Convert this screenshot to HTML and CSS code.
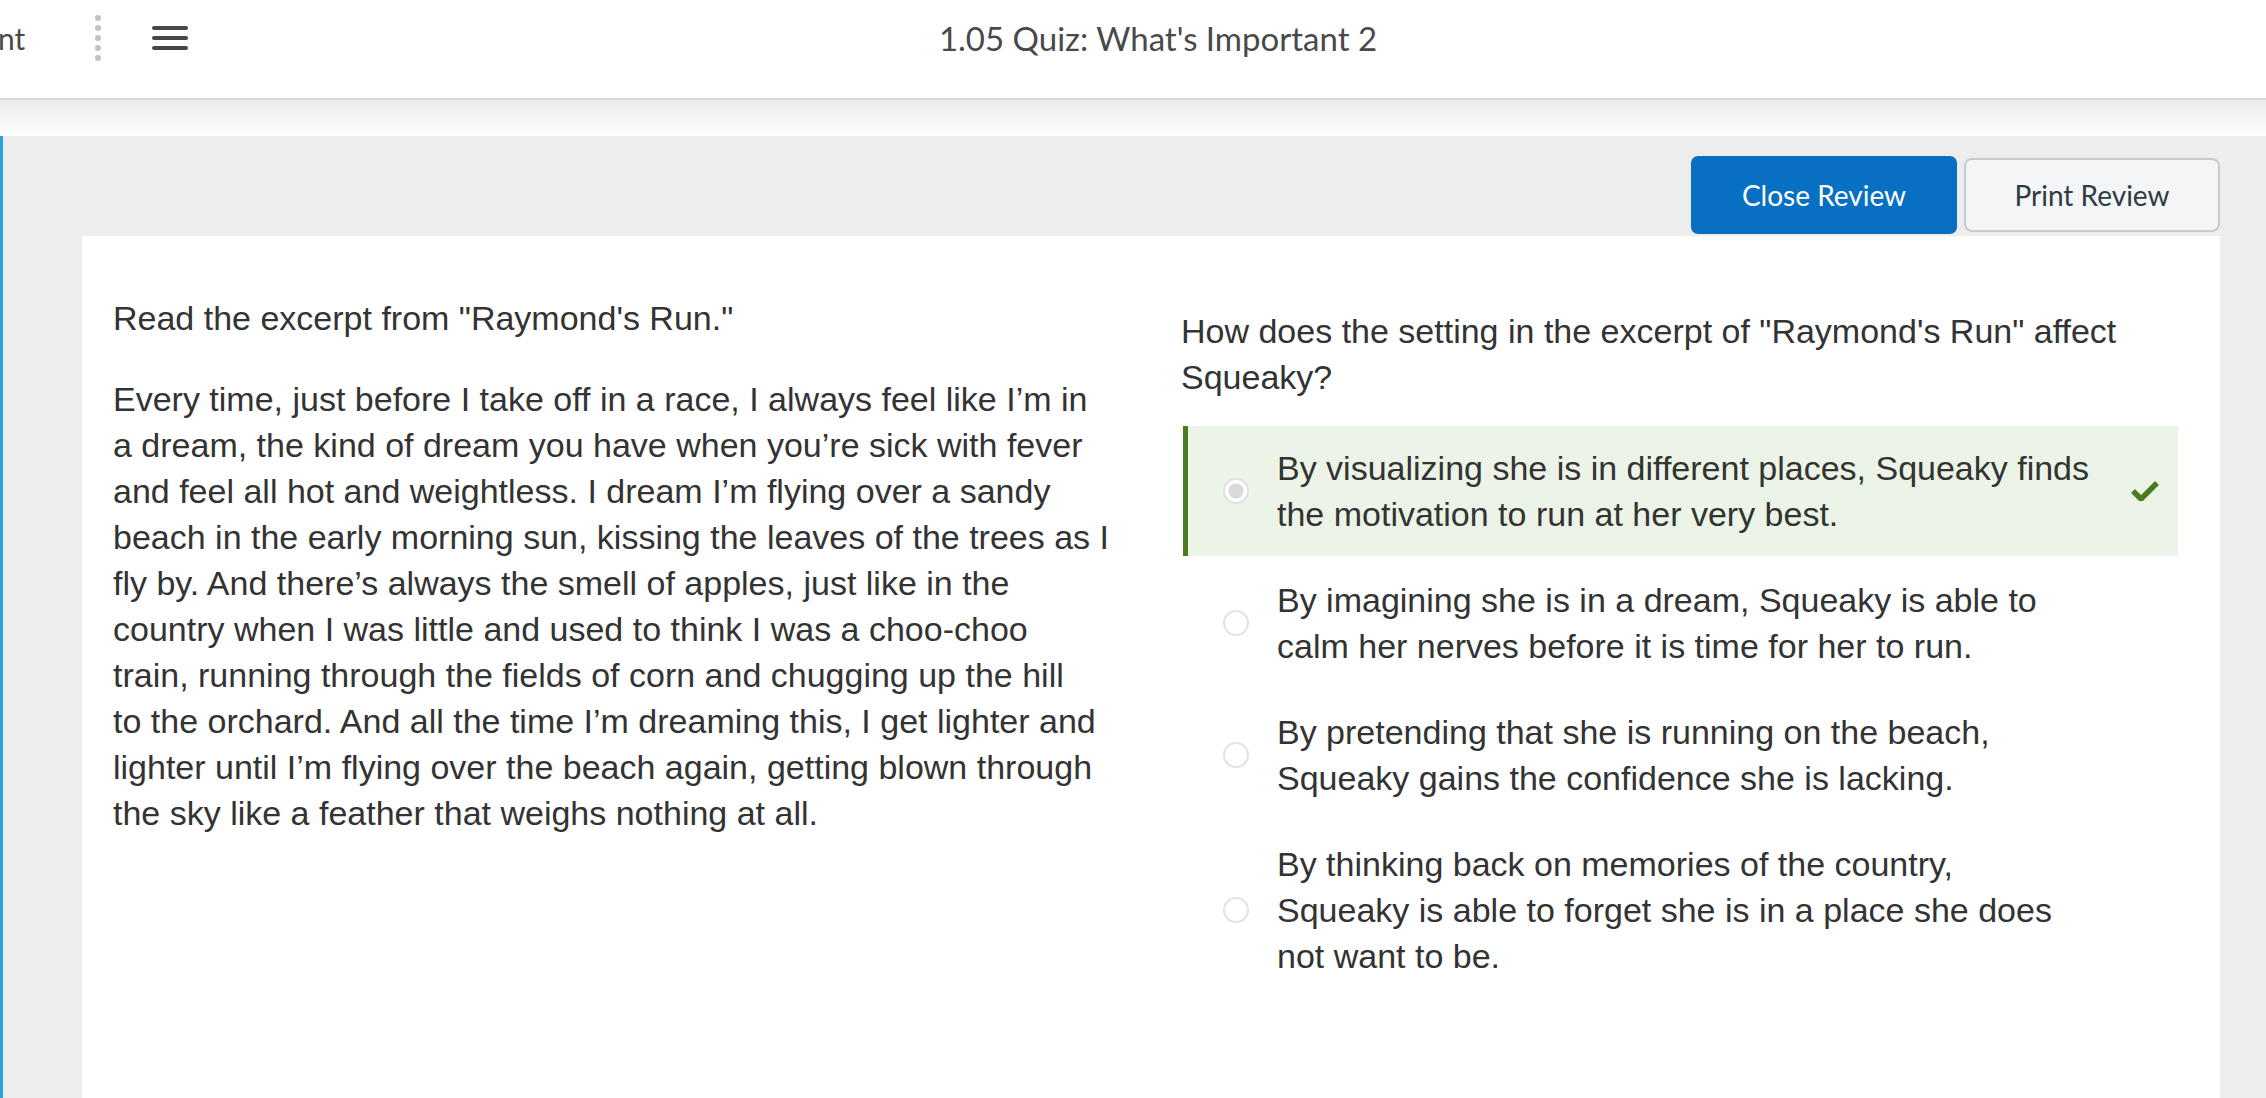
FILE: index.html
```html
<!DOCTYPE html>
<html lang="en">
<head>
  <meta charset="UTF-8">
  <title>1.05 Quiz: What's Important 2</title>
  <link rel="stylesheet" href="styles.css">
</head>
<body>
  <!-- Top bar -->
  <header class="topbar">
    <div class="topbar-left">
      <span class="course-name">nt</span>
      <span class="kebab"><i></i><i></i><i></i><i></i><i></i></span>
      <button type="button" class="menu-btn" aria-label="Menu">
        <span></span><span></span><span></span>
      </button>
    </div>
    <h1 class="page-title">1.05 Quiz: What's Important 2</h1>
    <div class="topbar-right"></div>
  </header>
  <div class="topbar-shadow"></div>

  <main class="review">
    <div class="review-actions">
      <button type="button" class="btn btn-primary">Close Review</button>
      <button type="button" class="btn btn-default">Print Review</button>
    </div>

    <section class="review-card">
      <!-- Passage -->
      <div class="passage">
        <p>Read the excerpt from "Raymond's Run."</p>
        <p>Every time, just before I take off in a race, I always feel like I’m in a dream, the kind of dream you have when you’re sick with fever and feel all hot and weightless. I dream I’m flying over a sandy beach in the early morning sun, kissing the leaves of the trees as I fly by. And there’s always the smell of apples, just like in the country when I was little and used to think I was a choo-choo train, running through the fields of corn and chugging up the hill<br>to the orchard. And all the time I’m dreaming this, I get lighter and lighter until I’m flying over the beach again, getting blown through the sky like a feather that weighs nothing at all.</p>
      </div>

      <!-- Question -->
      <div class="question">
        <p class="prompt">How does the setting in the excerpt of "Raymond's Run" affect Squeaky?</p>
        <ul class="choices">
          <li class="choice correct">
            <span class="radio checked"></span>
            <span class="choice-text">By visualizing she is in different places, Squeaky finds the motivation to run at her very best.</span>
            <svg class="check" viewBox="0 0 28 20" width="28" height="20"><polyline points="2,10 10,18 26,2" fill="none" stroke="#4b7b1f" stroke-width="5.5"/></svg>
          </li>
          <li class="choice">
            <span class="radio"></span>
            <span class="choice-text">By imagining she is in a dream, Squeaky is able to calm her nerves before it is time for her to run.</span>
          </li>
          <li class="choice">
            <span class="radio"></span>
            <span class="choice-text">By pretending that she is running on the beach, Squeaky gains the confidence she is lacking.</span>
          </li>
          <li class="choice">
            <span class="radio"></span>
            <span class="choice-text">By thinking back on memories of the country, Squeaky is able to forget she is in a place she does not want to be.</span>
          </li>
        </ul>
      </div>
    </section>
  </main>
</body>
</html>
```

FILE: styles.css
```css
body {
  margin: 0;
  font-family: "Liberation Sans", Arial, sans-serif;
  color: #333;
  background: #fff;
  overflow: hidden;
}

/* Top bar */
.topbar {
  display: flex;
  align-items: flex-start;
  height: 98px;
  background: #fff;
  border-bottom: 2px solid #d7d7d7;
  font-family: Lato, "Liberation Sans", sans-serif;
  color: #494949;
}
.topbar-left {
  display: flex;
  align-items: center;
  height: 76px;
  width: 190px;
}
.course-name {
  width: 97px;
  margin-left: -2px;
  font-size: 30px;
}
.kebab {
  display: flex;
  flex-direction: column;
  gap: 4px;
}
.kebab i {
  width: 6px;
  height: 6px;
  border-radius: 50%;
  background: #c3c3c3;
}
.menu-btn {
  display: flex;
  flex-direction: column;
  gap: 6px;
  margin-left: 51px;
  padding: 0;
  background: none;
  border: none;
}
.menu-btn span {
  width: 36px;
  height: 4px;
  border-radius: 2px;
  background: #474747;
}
.page-title {
  flex: 1;
  margin: 0;
  height: 76px;
  line-height: 76px;
  text-align: center;
  font-size: 33px;
  font-weight: normal;
}
.topbar-right {
  width: 140px;
}
.topbar-shadow {
  height: 36px;
  background: linear-gradient(#ebebeb, #fdfdfd);
}

/* Review area */
.review {
  background: #ededed;
  border-left: 3px solid #2ba1dc;
  padding: 20px 46px 0 79px;
}
.review-actions {
  display: flex;
  justify-content: flex-end;
  align-items: center;
  gap: 7px;
}
.btn {
  font-family: Lato, "Liberation Sans", sans-serif;
  font-size: 28px;
  cursor: pointer;
}
.btn-primary {
  width: 266px;
  height: 78px;
  background: #0770c3;
  color: #fff;
  border: none;
  border-radius: 7px;
}
.btn-default {
  width: 256px;
  height: 74px;
  background: #f4f5f7;
  color: #2d3b45;
  border: 2px solid #c6cbcf;
  border-radius: 8px;
}

.review-card {
  display: flex;
  align-items: flex-start;
  margin-top: 2px;
  min-height: 862px;
  padding: 0 42px 0 31px;
  background: #fff;
  font-size: 34px;
  line-height: 46px;
}
.passage {
  width: 998px;
  margin-right: 2px;
  padding-top: 59px;
}
.passage p {
  margin: 0 0 35px;
}
.question {
  width: 995px;
  margin-left: 70px;
  padding-top: 72px;
}
.prompt {
  margin: 0 0 26px -2px;
}
.choices {
  list-style: none;
  margin: 0;
  padding: 0;
}
.choice {
  display: flex;
  align-items: center;
  padding: 19px 18px 19px 0;
  border-left: 5px solid transparent;
}
.choice + .choice {
  margin-top: 2px;
}
.choice.correct {
  background: #ebf4e6;
  border-left-color: #4b7b1f;
}
.radio {
  flex: none;
  box-sizing: border-box;
  width: 26px;
  height: 26px;
  margin-left: 35px;
  border: 2px solid #e2e2e2;
  border-radius: 50%;
  background: #fff;
}
.radio.checked {
  background: radial-gradient(circle, #d9d9d9 0 7px, #fff 8px);
}
.choice-text {
  width: 816px;
  margin-left: 28px;
}
.check {
  flex: none;
  margin-left: 38px;
}
```
